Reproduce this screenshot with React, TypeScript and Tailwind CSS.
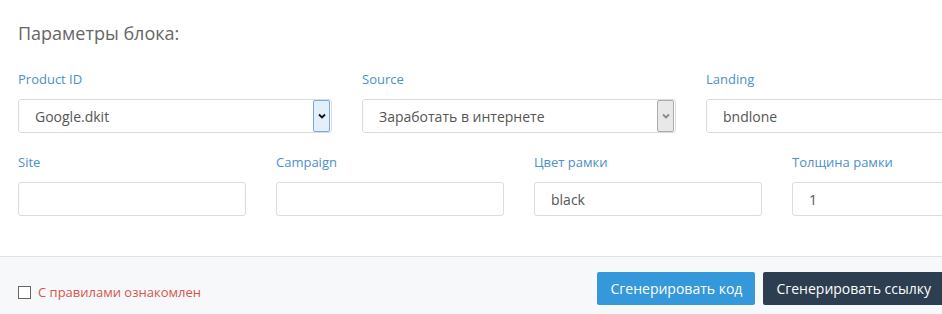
import React from 'react';

const font = { fontFamily: '"Open Sans", "Noto Sans", sans-serif' };

function Label({ children }: { children: React.ReactNode }) {
  return <div className="h-[19px] text-[13px] leading-[19px] text-[#4b8fcb]">{children}</div>;
}

function TextBox({ value }: { value?: string }) {
  return (
    <div className="mt-[10px] flex h-[34px] items-center rounded-[3px] border border-[#dcdcdc] bg-white px-[16px] text-[14px] text-[#555]">
      {value}
    </div>
  );
}

function Chevron({ color }: { color: string }) {
  return (
    <svg width="8" height="6" viewBox="0 0 8 6">
      <path d="M1 1.5 L4 4.5 L7 1.5" fill="none" stroke={color} strokeWidth="1.8" />
    </svg>
  );
}

function SelectBox({ value, active }: { value: string; active?: boolean }) {
  return (
    <div className="mt-[10px] flex h-[34px] items-center rounded-[3px] border border-[#dcdcdc] bg-white pl-[16px] pr-px text-[14px] text-[#555]">
      <span className="flex-1">{value}</span>
      {active ? (
        <span className="flex h-[32px] w-[17px] items-center justify-center rounded-[2px] border border-[#7aa9d8] bg-[#e3effb]">
          <Chevron color="#111" />
        </span>
      ) : (
        <span className="flex h-[32px] w-[17px] items-center justify-center rounded-[2px] border border-[#acacac] bg-[#e8e8e8]">
          <Chevron color="#888" />
        </span>
      )}
    </div>
  );
}

export default function App() {
  return (
    <div className="w-[942px] h-[314px] overflow-hidden bg-white" style={font}>
      <div className="w-[1038px] px-[18px] pt-[21px] pb-[40px]">
        <h3 className="text-[18px] leading-[24px] text-[#666]">Параметры блока:</h3>

        <div className="mt-[25px] grid grid-cols-3 gap-x-[30px]">
          <div>
            <Label>Product ID</Label>
            <SelectBox value="Google.dkit" active />
          </div>
          <div>
            <Label>Source</Label>
            <SelectBox value="Заработать в интернете" />
          </div>
          <div>
            <Label>Landing</Label>
            <TextBox value="bndlone" />
          </div>
        </div>

        <div className="mt-[20px] grid grid-cols-4 gap-x-[30px]">
          <div>
            <Label>Site</Label>
            <TextBox />
          </div>
          <div>
            <Label>Campaign</Label>
            <TextBox />
          </div>
          <div>
            <Label>Цвет рамки</Label>
            <TextBox value="black" />
          </div>
          <div>
            <Label>Толщина рамки</Label>
            <TextBox value="1" />
          </div>
        </div>
      </div>

      <div className="flex h-[58px] items-start justify-between border-t border-[#e2e2e2] bg-[#f7f8fa] pl-[18px] pt-[15px]">
        <label className="mt-[11px] flex items-center gap-[7px] text-[13px] leading-[18px] text-[#d9534f]">
          <span className="h-[13px] w-[13px] border border-[#666] bg-white" />
          С правилами ознакомлен
        </label>
        <div className="flex gap-[8px] -mr-[2px]">
          <button className="h-[33px] rounded-[2px] bg-[#3498db] px-[13px] text-[14px] text-white">
            Сгенерировать код
          </button>
          <button className="h-[33px] rounded-[2px] bg-[#2c3e50] px-[13px] text-[14px] text-white">
            Сгенерировать ссылку
          </button>
        </div>
      </div>
    </div>
  );
}
